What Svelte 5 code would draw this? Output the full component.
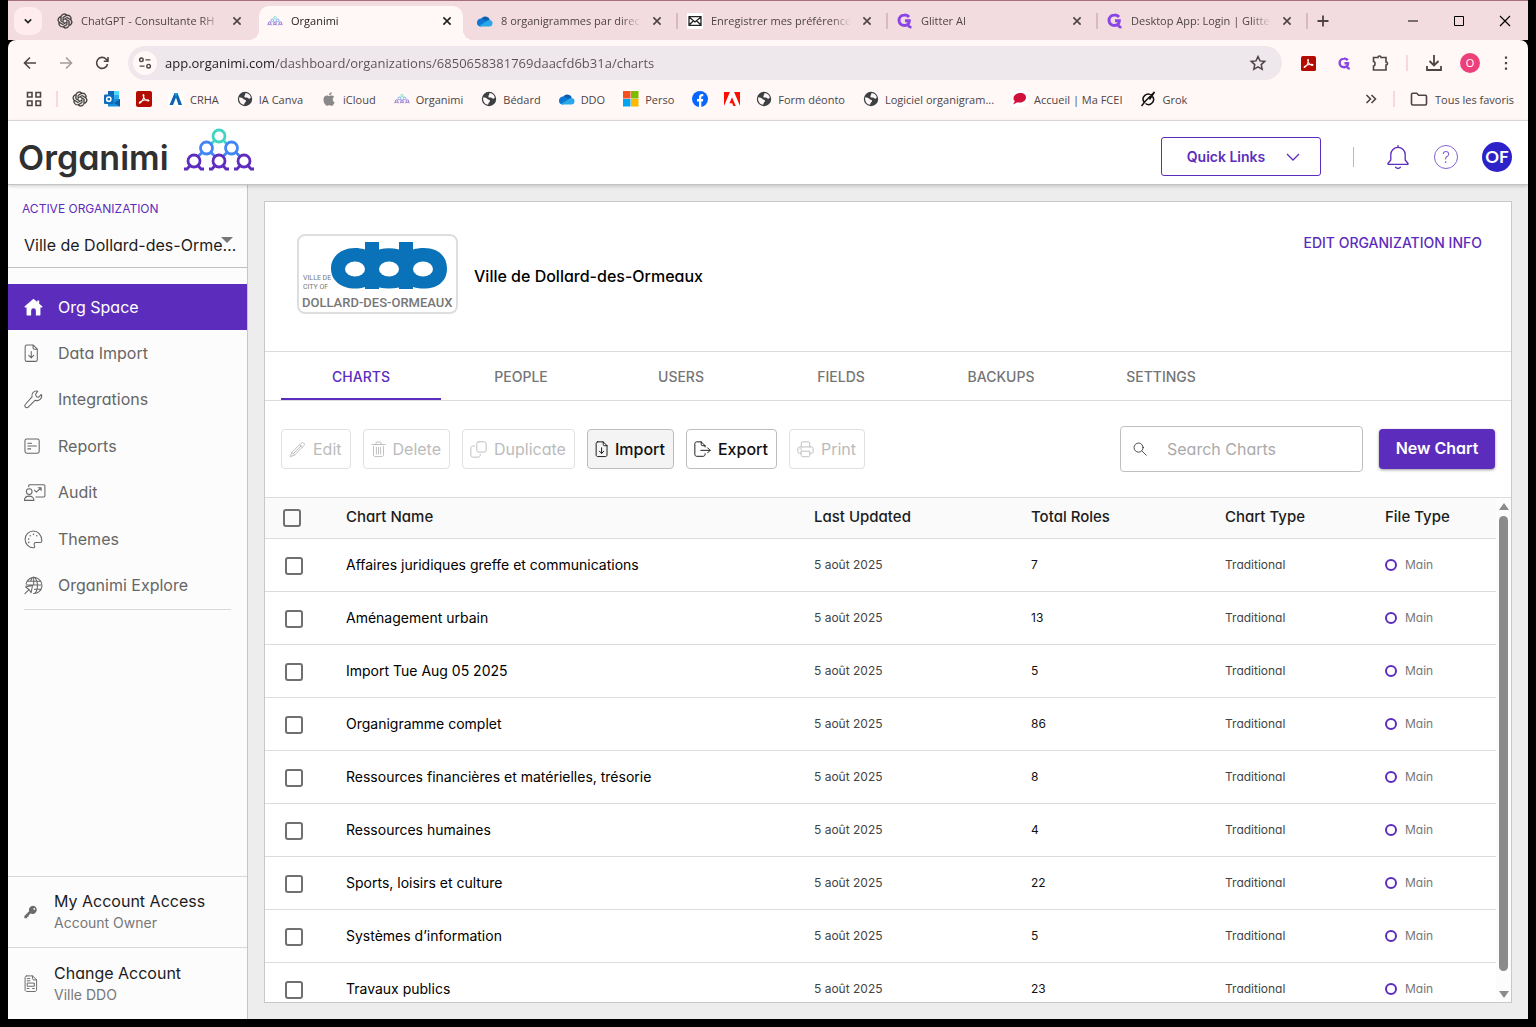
<script>
  const browserTabs = [
    { icon: 'gpt', title: 'ChatGPT - Consultante RH' },
    { icon: 'organimi', title: 'Organimi', active: true },
    { icon: 'cloud', title: '8 organigrammes par direction' },
    { icon: 'mail', title: 'Enregistrer mes préférences', sep: true },
    { icon: 'glitter', title: 'Glitter AI', sep: true },
    { icon: 'glitter', title: 'Desktop App: Login | Glitter AI', sep: true }
  ];

  const bookmarks = [
    { icon: 'gpt', name: 'ChatGPT', bare: true },
    { icon: 'outlook', name: 'Outlook', bare: true },
    { icon: 'acrobat', name: 'Acrobat', bare: true },
    { icon: 'crha', name: 'CRHA' },
    { icon: 'globe', name: 'IA Canva' },
    { icon: 'apple', name: 'iCloud' },
    { icon: 'organimi', name: 'Organimi' },
    { icon: 'globe', name: 'Bédard' },
    { icon: 'cloud', name: 'DDO' },
    { icon: 'microsoft', name: 'Perso' },
    { icon: 'facebook', name: 'Facebook', bare: true },
    { icon: 'adobe', name: 'Adobe', bare: true },
    { icon: 'globe', name: 'Form déonto' },
    { icon: 'globe', name: 'Logiciel organigram...' },
    { icon: 'fcei', name: 'Accueil | Ma FCEI' },
    { icon: 'grok', name: 'Grok' }
  ];

  const nav = [
    { icon: 'home', label: 'Org Space', active: true },
    { icon: 'fileDown', label: 'Data Import' },
    { icon: 'wrench', label: 'Integrations' },
    { icon: 'report', label: 'Reports' },
    { icon: 'audit', label: 'Audit' },
    { icon: 'palette', label: 'Themes' },
    { icon: 'explore', label: 'Organimi Explore' }
  ];

  const sections = ['Charts', 'People', 'Users', 'Fields', 'Backups', 'Settings'];
  let section = $state('Charts');

  const actions = [
    { icon: 'pencil', label: 'Edit', disabled: true },
    { icon: 'trash', label: 'Delete', disabled: true },
    { icon: 'copy', label: 'Duplicate', disabled: true },
    { icon: 'fileDown', label: 'Import', hover: true },
    { icon: 'fileOut', label: 'Export' },
    { icon: 'printer', label: 'Print', disabled: true }
  ];

  // Drawn width of the narrow icons, on a 20-unit grid
  const iconWidths = { fileDown: 15, trash: 18 };

  const charts = [
    ['Affaires juridiques greffe et communications', 7],
    ['Aménagement urbain', 13],
    ['Import Tue Aug 05 2025', 5],
    ['Organigramme complet', 86],
    ['Ressources financières et matérielles, trésorie', 8],
    ['Ressources humaines', 4],
    ['Sports, loisirs et culture', 22],
    ['Systèmes d’information', 5],
    ['Travaux publics', 23]
  ];
</script>

{#snippet people(w)}
  <g fill="none" stroke-width={w}>
    <g stroke="#3ed6c0"><circle cx="36" cy="8" r="6" /><path d="M31 13l-3 3M41 13l3 3" /></g>
    <g stroke="#4285f4"><circle cx="23.500" cy="20" r="6" /><circle cx="48.500" cy="20" r="6" /><path d="M19 24.500l-4 4M28 24.500l4 4M44 24.500l-4 4M53 24.500l4 4" /></g>
    <g stroke="#5e2dbe">
      {#each [11, 36, 61] as x}
        <circle cx={x} cy="33" r="6" />
        <path d="M{x - 10} 41h3l4-4.500M{x + 10} 41h-3l-4-4.500" />
      {/each}
    </g>
  </g>
{/snippet}

{#snippet fav(name)}
  {#if name === 'organimi'}
    <svg class="fav" viewBox="-1 -14 74 74" opacity=".7">{@render people(4)}</svg>
  {:else if name === 'gpt'}
    <svg class="fav" viewBox="-1 -1 26 26"><path fill="#333" stroke="#333" stroke-width=".5" d="M22.282 9.821a5.985 5.985 0 0 0-.516-4.91 6.046 6.046 0 0 0-6.51-2.9A6.065 6.065 0 0 0 4.981 4.182a5.985 5.985 0 0 0-3.998 2.9 6.046 6.046 0 0 0 .743 7.096 5.98 5.98 0 0 0 .511 4.911 6.051 6.051 0 0 0 6.515 2.9A5.985 5.985 0 0 0 13.26 24a6.056 6.056 0 0 0 5.772-4.206 5.989 5.989 0 0 0 3.998-2.9 6.056 6.056 0 0 0-.748-7.073zM13.26 22.429a4.476 4.476 0 0 1-2.876-1.04l.142-.081 4.778-2.758a.795.795 0 0 0 .393-.681v-6.737l2.02 1.168a.071.071 0 0 1 .038.052v5.583a4.504 4.504 0 0 1-4.495 4.494zM3.6 18.304a4.47 4.47 0 0 1-.535-3.014l.142.085 4.783 2.759a.771.771 0 0 0 .78 0l5.843-3.369v2.332a.08.08 0 0 1-.033.062L9.74 19.95A4.5 4.5 0 0 1 3.6 18.304zM2.34 7.896a4.485 4.485 0 0 1 2.366-1.973V11.6a.766.766 0 0 0 .388.677l5.814 3.354-2.02 1.168a.076.076 0 0 1-.071 0l-4.83-2.786A4.504 4.504 0 0 1 2.34 7.896zm16.597 3.855L13.104 8.364 15.119 7.2a.076.076 0 0 1 .071 0l4.83 2.791a4.494 4.494 0 0 1-.676 8.105v-5.678a.79.79 0 0 0-.407-.667zm2.01-3.023l-.141-.085-4.774-2.782a.776.776 0 0 0-.785 0L9.409 9.23V6.897a.066.066 0 0 1 .028-.061l4.83-2.787a4.5 4.5 0 0 1 6.68 4.66zM8.307 12.863l-2.02-1.164a.08.08 0 0 1-.038-.057V6.074a4.5 4.5 0 0 1 7.376-3.453l-.142.08L8.704 5.46a.795.795 0 0 0-.393.681zm1.097-2.365l2.602-1.5 2.607 1.5v2.999l-2.597 1.5-2.607-1.5Z" /></svg>
  {:else if name === 'cloud'}
    <svg class="fav" viewBox="0 0 16 16"><path fill="#0f5fb0" d="M4 6a5 5 0 0 1 8-1l1 3-9 1z" /><path fill="#0a78d4" d="M0 10a4 4 0 0 1 5-4.300l7 3.300-8 4.500H3A3.500 3.500 0 0 1 0 10z" /><path fill="#28a8ea" d="M2 13l7-4.500a4 4 0 0 1 4-1.500 3.300 3.300 0 0 1-.5 6.500H4z" /></svg>
  {:else if name === 'mail'}
    <svg class="fav" viewBox="0 0 16 16"><path fill="#fff" d="M0 0h16v16H0z" /><path d="M2 3.700h12v8.600H2zM2 4l6 5 6-5M2 12l4.500-4.200M14 12L9.500 7.800" fill="none" stroke="#222" stroke-width="1.300" /></svg>
  {:else if name === 'glitter'}
    <svg class="fav" viewBox="0 0 16 16"><path d="M12 4A5 5 0 0 0 7.500 2C4.500 2 2 4.200 2 7.300s2.500 5.200 5.500 5.200S12.300 10.500 12.300 7.800H8" fill="none" stroke="#8a45e6" stroke-width="3" /><path d="M11 10.500c0 2.500 1 3.800 3.500 3.800" fill="none" stroke="#8a45e6" stroke-width="2.600" /></svg>
  {:else if name === 'outlook'}
    <svg class="fav" viewBox="0 0 16 16"><path fill="#1066b5" d="M4 0h6v8H4z" /><path fill="#32a9e7" d="M10 0h5v8h-5z" /><path fill="#50d9ff" d="M10 0h5v4h-5z" /><path fill="#1490df" d="M4 8h12v7.500H4z" /><path fill="#0a5ea8" d="M16 8l-6 4 6 3.500z" /><rect y="3.500" width="9.500" height="9.500" rx="1" fill="#0f6cbd" /><circle cx="4.800" cy="8.200" r="2.100" fill="none" stroke="#fff" stroke-width="1.500" /></svg>
  {:else if name === 'acrobat'}
    <svg class="fav" viewBox="0 0 16 16"><rect width="16" height="16" rx="2" fill="#b30b00" /><path d="M3.500 12.200c1.500.3 4.500-4.700 4.400-7.800 0-1.200-1-1-.8.300.5 3 3 5.300 4.800 5.300 1.600 0 1.200-1.200-.4-1.200-2.500 0-5.500.8-7.200 2-.9.700-1.300 1.300-.8 1.400z" fill="none" stroke="#fff" stroke-width="1.100" /></svg>
  {:else if name === 'crha'}
    <svg class="fav" viewBox="0 0 16 16"><path fill="#fff" d="M0 0h16v16H0z" /><path d="M6.500 2h3L14 14h-3.500L8 6.500 5 14H1.500z" fill="#0b62b0" /><path d="M6.500 2h3L8 6.500z" fill="#1fa2e0" /></svg>
  {:else if name === 'globe'}
    <svg class="fav" viewBox="0 0 16 16"><circle cx="8" cy="8" r="7.200" fill="#3c4043" /><path d="M2 6.500c2 .2 3.500 0 4.500 1.500.5 1 2 .5 2.500 1.500.3 1.500-1.500 1.500-1.800 4.300C4.500 13.500 2 11.500 2 6.500zM8.500 2c3 .2 4.800 2 5.300 4.500-1 1.700-2.500 1.300-3.300.3-.8-.8-2.500.2-3-.8C7 4.500 8.500 4 8.500 2z" fill="#fff8f7" /></svg>
  {:else if name === 'apple'}
    <svg class="fav" viewBox="-2 -2 28 28"><path fill="#888" d="M12.152 6.896c-.948 0-2.415-1.078-3.960-1.040-2.040.027-3.910 1.183-4.961 3.014-2.117 3.675-.546 9.103 1.519 12.090 1.013 1.454 2.208 3.090 3.792 3.039 1.520-.065 2.090-.987 3.935-.987 1.831 0 2.350.987 3.960.948 1.637-.026 2.676-1.480 3.676-2.948 1.156-1.688 1.636-3.325 1.662-3.415-.039-.013-3.182-1.221-3.220-4.857-.026-3.040 2.480-4.494 2.597-4.559-1.429-2.090-3.623-2.324-4.390-2.376-2-.156-3.675 1.090-4.610 1.090zM15.530 3.830c.843-1.012 1.400-2.427 1.245-3.830-1.207.052-2.662.805-3.532 1.818-.780.896-1.454 2.338-1.273 3.714 1.338.104 2.715-.688 3.559-1.701" /></svg>
  {:else if name === 'microsoft'}
    <svg class="fav" viewBox="0 0 16 16"><path fill="#f25022" d="M0 0h7.500v7.500H0z" /><path fill="#7fba00" d="M8 0h7.500v7.500H8z" /><path fill="#00a4ef" d="M0 8h7.500v7.500H0z" /><path fill="#ffb900" d="M8 8h7.500v7.500H8z" /></svg>
  {:else if name === 'facebook'}
    <svg class="fav" viewBox="0 0 16 16"><circle cx="8" cy="8" r="8" fill="#0866ff" /><path fill="#fff" d="M7 16v-5.500H5V8h2V6.600C7 4 8.300 3 10 3c.5 0 1 0 1.300.1v2.200h-1C9.500 5.300 9.300 5.700 9.300 6.500V8h2l-.4 2.500H9.300V16z" /></svg>
  {:else if name === 'adobe'}
    <svg class="fav" viewBox="0 0 24 24"><path fill="#fff" d="M0 1h24v22H0z" /><path fill="#fa0f00" d="M13.966 22.624l-1.690-4.281H8.122l3.892-9.144 5.662 13.425zM8.884 1.376H0v21.248zm15.116 0h-8.884L24 22.624Z" /></svg>
  {:else if name === 'fcei'}
    <svg class="fav" viewBox="0 0 16 16"><path fill="#fff" d="M0 0h16v16H0z" /><path fill="#d0103a" d="M8.500 2C12 2 14 4 14 6.500s-2.500 5-6 5c-1 0-2 0-2.500-.3L1 13.500l2-3.500C1.500 9.500 1.500 8 1.500 7c.5-3 3.500-5 7-5z" /></svg>
  {:else if name === 'grok'}
    <svg class="fav" viewBox="0 0 16 16"><path d="M11.500 4.500a5 5 0 0 0-7.500 6.500M5.500 12.500a5 5 0 0 0 7-7M1.500 15l4-5L14.500 1l-5 7.500" fill="none" stroke="#111" stroke-width="1.500" /></svg>
  {/if}
{/snippet}

{#snippet icon(name, size = 20, w = 20)}
  <svg class="icon" width={Math.round((size * w) / 20)} height={size} viewBox="0 0 {w} 20" fill="none" stroke="currentColor" stroke-width="1.100" stroke-linecap="round" stroke-linejoin="round">
    {#if name === 'home'}
      <path d="M10 .800L.800 8.800c-.500.600-.300 1.200.400 1.200h1.500v7.500c0 .6.400 1 1 1H7.500v-5.200a2.500 2.500 0 0 1 5 0v5.200h3.800c.6 0 1-.4 1-1V10h1.500c.7 0 .9-.6.4-1.200L16 6V2.500h-2v1.800z" fill="currentColor" stroke="none" />
    {:else if name === 'fileDown'}
      <path d="M3 1h6.500l4.500 4.500v11c0 1-.7 1.800-1.800 1.800H3c-1 0-1.800-.8-1.800-1.800V2.800C1.200 1.800 2 1 3 1zM9.500 1v3c0 1 .6 1.500 1.500 1.500h3M7.600 8v6.500M5 12l2.600 2.600L10.200 12" />
    {:else if name === 'wrench'}
      <path d="M14.500 1.200a4.800 4.800 0 0 0-6 6L1.500 15a2 2 0 0 0 3 3l7.300-7.300a4.800 4.800 0 0 0 6.500-6L15.500 7.500 13 7l-.8-2.500z" />
    {:else if name === 'report'}
      <rect x="1" y="2" width="15" height="15" rx="2" /><path d="M4 6.500h4M4 9.500h9M4 12.500h3" />
    {:else if name === 'audit'}
      <path d="M5 4V3c0-.8.5-1.200 1.200-1.200h14.600c.7 0 1.200.4 1.200 1.200v10.500c0 .7-.5 1.200-1.200 1.200H12.500M11 7.500l2 2L18 5M15 5h3v3" /><circle cx="5.500" cy="9" r="3" /><path d="M.5 18.300c0-6 10-6 10 0z" />
    {:else if name === 'palette'}
      <path d="M10 1a8.800 8.800 0 1 0 0 17.700c1.500 0 1.500-1 1-2-.8-2-.2-3.500 1.500-3.500h4.500c1 0 1.800-.5 1.800-2C18.500 5 14.500 1 10 1z" /><path d="M5 9.500v.1M6.500 6v.1M10 4.500v.1M13.500 6v.1M5 13v.1" stroke-width="1.600" />
    {:else if name === 'explore'}
      <path d="M2.200 8A8.500 8.500 0 1 1 10 18.500M7 5.500C8 2.500 9 1 10.200 1s4 3.500 4 8.700-2 8.800-3.700 8.800M10.200 1v8M3 5.500h14.500M2.200 9.500h16.500M11 14h6.500M1 18.500l4-4M1.500 11.500l7.500-1.500-1.500 7.500-2-3z" />
    {:else if name === 'doc'}
      <path d="M3 1h6.500l4.500 4.500v11c0 1-.7 1.800-1.800 1.800H3c-1 0-1.800-.8-1.800-1.800V2.800C1.200 1.800 2 1 3 1zM9.500 1v3c0 1 .6 1.500 1.500 1.500h3M3.500 4h3M3.500 6.500h3M4 9h7.500v3.500H4zM3.500 15h2M9.500 15h2" />
    {:else if name === 'key'}
      <path d="M13 1a6 6 0 0 0-5.700 8L.5 15.700V19h4v-2.200h2.200v-2.300L9.500 12.300A6 6 0 1 0 13 1zm1.700 3.300a1.300 1.300 0 1 1 0 2.600 1.300 1.300 0 0 1 0-2.600z" fill="currentColor" stroke="none" />
    {:else if name === 'pencil'}
      <path d="M14.500 2.500c1-1 2-1 3 0s1 2 0 3L6.500 16.500 1.500 18.500l2-5zM12.500 4.500l3 3M3.500 13.500l3 3M5.500 14.500l9-9" />
    {:else if name === 'trash'}
      <path d="M1 4h16M6 4V2c0-.6.400-1 1-1h4c.6 0 1 .4 1 1v2M3 6.500v10c0 1 .8 2 2 2h8c1.200 0 2-1 2-2v-10M6.500 7.500v8M9 7.500v8M11.500 7.500v8" />
    {:else if name === 'copy'}
      <rect x="8" y="1" width="11" height="12" rx="2" /><path d="M5.500 6H3C2 6 1 7 1 8v9c0 1 1 2 2 2h7c1 0 2-1 2-2v-1.500" />
    {:else if name === 'fileOut'}
      <path d="M13 7V5.500L8.500 1H3C2 1 1 2 1 3v13c0 1 1 2 2 2h8c1 0 2-1 2-2v-1M8.500 1v3c0 1 .5 1.500 1.500 1.500h3M8 11h11M16 8l3 3-3 3" />
    {:else if name === 'printer'}
      <path d="M5 7V2.500C5 1.600 5.600 1 6.500 1h7c.9 0 1.500.6 1.500 1.500V7M4.500 14.500H3c-1.200 0-2-.8-2-2V9c0-1.200.8-2 2-2h14c1.200 0 2 .8 2 2v3.500c0 1.200-.8 2-2 2h-1.500M5 12h10v5c0 .9-.6 1.500-1.500 1.500h-7C5.600 18.500 5 17.900 5 17zM3.500 9.500h2" />
    {:else if name === 'search'}
      <circle cx="8" cy="8" r="6.500" /><path d="M13 13l6 6" />
    {:else if name === 'bell'}
      <path d="M10 .500v1.500M4 12.500V8a6 6 0 0 1 12 0v4.500l2.200 2.700c.3.400.2 1-.4 1H2.200c-.6 0-.7-.6-.4-1zM8 18.500c.8 1.300 3.200 1.300 4 0" />
    {/if}
  </svg>
{/snippet}

{#snippet glyph(d, w = 1.6)}
  <svg class="glyph" viewBox="0 0 20 20" fill="none" stroke="currentColor" stroke-width={w}><path {d} /></svg>
{/snippet}

<div class="window">
  <div class="strip">
    <button class="tab-search" aria-label="Search tabs">{@render glyph('M6 8l4 4 4-4', 2)}</button>
    {#each browserTabs as t}
      <div class="btab" class:active={t.active} class:sep={t.sep}>
        {@render fav(t.icon)}
        <button class="btitle">{t.title}</button>
        <button class="bclose" aria-label="Close tab">{@render glyph('M5.500 5.500l9 9M14.500 5.500l-9 9', 2)}</button>
      </div>
    {/each}
    <div class="newtab"><button aria-label="New tab">{@render glyph('M10 4.500v11M4.500 10h11', 1.8)}</button></div>
    <div class="winctl">
      <button aria-label="Minimize">{@render glyph('M5 10h10', 1)}</button>
      <button aria-label="Maximize">{@render glyph('M5.500 5.500h9v9h-9z', 1)}</button>
      <button aria-label="Close">{@render glyph('M5 5l10 10M15 5L5 15', 1.2)}</button>
    </div>
  </div>

  <div class="toolbar">
    <button class="tool" aria-label="Back">{@render glyph('M16 10H5M10 4.500L4.500 10l5.500 5.500')}</button>
    <button class="tool faded" aria-label="Forward">{@render glyph('M4 10h11M10 4.500l5.500 5.500L10 15.500')}</button>
    <button class="tool" aria-label="Reload">{@render glyph('M15.500 11a5.500 5.500 0 1 1-1.500-5l2 2M16 4v4.200h-4.200')}</button>
    <div class="address">
      <button class="site" aria-label="Site information">{@render glyph('M10.500 6.500H16M4 13.500h5.500M4 6.500a2 2 0 1 0 4 0a2 2 0 1 0-4 0M12 13.500a2 2 0 1 0 4 0a2 2 0 1 0-4 0')}</button>
      <input class="url" aria-label="Address" value="app.organimi.com/dashboard/organizations/6850658381769daacfd6b31a/charts" />
      <button class="star" aria-label="Bookmark">{@render glyph('M10 3.500l2 4.400 4.800.5-3.600 3.200 1 4.700L10 13.900l-4.200 2.400 1-4.700-3.600-3.200L8 7.900z', 1.5)}</button>
    </div>
    <button class="tool" aria-label="Acrobat">{@render fav('acrobat')}</button>
    <button class="tool small" aria-label="Glitter">{@render fav('glitter')}</button>
    <button class="tool" aria-label="Extensions">{@render glyph('M3.500 4.500h4.500c0-2 3-2 3 0h5V9c2 0 2 3 0 3v5h-12.500v-4c2 0 2-4.500 0-4.500z')}</button>
    <span class="bar"></span>
    <button class="tool" aria-label="Downloads">{@render glyph('M10 2v10M5.500 8L10 12.500 14.500 8M3 13v4h14v-4', 1.8)}</button>
    <button class="tool" aria-label="Profile"><span class="profile">O</span></button>
    <button class="tool" aria-label="Menu">{@render glyph('M10 3.500v2.200M10 9v2.200M10 14.500v2.200', 2.2)}</button>
  </div>

  <div class="bookmarks">
    <button class="apps" aria-label="Apps">{@render glyph('M3.500 3.500h4.500v4.500H3.500zM12 3.500h4.500v4.500H12zM3.500 12h4.500v4.500H3.500zM12 12h4.500v4.500H12z')}</button>
    <span class="bar"></span>
    {#each bookmarks as b}
      <a class="bookmark" class:bare={b.bare} href="#{b.icon}" aria-label={b.name}>{@render fav(b.icon)}{#if !b.bare}<span>{b.name}</span>{/if}</a>
    {/each}
    <button class="more" aria-label="More bookmarks">{@render glyph('M5.500 6l4 4-4 4M10.500 6l4 4-4 4')}</button>
    <span class="bar"></span>
    <a class="bookmark all" href="#all">{@render glyph('M2.500 5.500c0-.8.5-1.300 1.200-1.300h4l2 2h6.600c.7 0 1.200.5 1.200 1.200v7.400c0 .7-.5 1.200-1.200 1.200H3.700c-.7 0-1.200-.5-1.200-1.200z')}<span>Tous les favoris</span></a>
  </div>

  <header>
    <a class="brand" href="#home"><span>Organimi</span><svg viewBox="0 0 72 44" aria-hidden="true">{@render people(2.8)}</svg></a>
    <button class="quick">Quick Links {@render glyph('M4 7l6 6 6-6', 1.3)}</button>
    <span class="rule"></span>
    <button class="round" aria-label="Notifications">{@render icon('bell', 24)}</button>
    <button class="round help" aria-label="Help">?</button>
    <button class="avatar">OF</button>
  </header>

  <div class="body">
    <aside>
      <div class="active-org">
        <label for="org">ACTIVE ORGANIZATION</label>
        <div class="pick">
          <select id="org"><option>Ville de Dollard-des-Ormeaux</option></select>
          <i></i>
        </div>
      </div>
      <nav>
        {#each nav as n}
          <a href="#{n.icon}" class:on={n.active}><span class="slot">{@render icon(n.icon)}</span><span>{n.label}</span></a>
        {/each}
      </nav>
      <a class="account first" href="#access"><span class="slot">{@render icon('key', 14)}</span><span>My Account Access<small>Account Owner</small></span></a>
      <a class="account" href="#change"><span class="slot">{@render icon('doc', 18)}</span><span>Change Account<small>Ville DDO</small></span></a>
    </aside>

    <main>
      <div class="card">
        <div class="org">
          <div class="logo">
            <svg viewBox="0 0 157 76" role="img" aria-label="Dollard-des-Ormeaux">
              <path fill="#0a72b8" d="M66 6h14v7.500q10-2.500 20 0V6h14v7.500c4-1 6-1.500 11-1.500 14 0 23 8 23 20.500s-9 20-23 20c-4 0-7-.5-11-1.500V53h-14v-1.500q-10 2-20 0V53H66v-2c-4 1-6 1.500-10 1.500-14 0-24-8-24-20s10-20.500 24-20.500c4 0 6 .5 10 1.500z" />
              <g fill="#fff"><ellipse cx="56" cy="33" rx="10" ry="7.500" /><ellipse cx="90" cy="33" rx="10" ry="7.500" /><ellipse cx="124" cy="33" rx="10" ry="7.500" /></g>
              <g class="tiny"><text x="4" y="44">VILLE DE</text><text x="4" y="53">CITY OF</text></g>
              <text class="name" x="3" y="71">DOLLARD-DES-ORMEAUX</text>
            </svg>
          </div>
          <h1>Ville de Dollard-des-Ormeaux</h1>
          <button class="edit">EDIT ORGANIZATION INFO</button>
        </div>

        <div class="tabs" role="tablist">
          {#each sections as s}
            <button role="tab" aria-selected={section === s} class:on={section === s} onclick={() => (section = s)}>{s}</button>
          {/each}
        </div>

        <div class="actions">
          {#each actions as a}
            <button class="act" class:hover={a.hover} disabled={a.disabled}>{@render icon(a.icon, 17, iconWidths[a.icon])}<span>{a.label}</span></button>
          {/each}
          <label class="search">{@render icon('search', 14)}<input type="text" placeholder="Search Charts" aria-label="Search Charts" /></label>
          <button class="new">New Chart</button>
        </div>

        <div class="list">
          <div class="scroll">
            <table>
              <colgroup><col class="c1" /><col /><col class="c3" /><col class="c4" /><col class="c5" /><col class="c6" /></colgroup>
              <thead>
                <tr><th><input type="checkbox" aria-label="Select all" /></th><th>Chart Name</th><th>Last Updated</th><th>Total Roles</th><th>Chart Type</th><th>File Type</th></tr>
              </thead>
              <tbody>
                {#each charts as [name, roles]}
                  <tr>
                    <td><input type="checkbox" aria-label={name} /></td>
                    <td class="cname">{name}</td>
                    <td class="date">5 août 2025</td>
                    <td class="roles">{roles}</td>
                    <td class="type">Traditional</td>
                    <td class="file"><span><i></i>Main</span></td>
                  </tr>
                {/each}
              </tbody>
            </table>
          </div>
          <div class="scrollbar"><i class="up"></i><i class="thumb"></i><i class="down"></i></div>
        </div>
      </div>
    </main>
  </div>
</div>

<style>
  :global(body) { margin: 0; background: #000; }
  * { box-sizing: border-box; }
  button, input, select { font: inherit; color: inherit; border: 0; background: none; padding: 0; margin: 0; outline: 0; }
  button { cursor: pointer; }
  a { color: inherit; text-decoration: none; }
  svg { display: block; flex: none; }

  .window { height: 100vh; display: flex; flex-direction: column; padding: 0 8px 8px; font-family: Inter, "Liberation Sans", sans-serif; font-size: 16px; color: #1c1c1c; font-feature-settings: "cv11"; }
  .fav { width: 16px; height: 16px; }
  .glyph { width: 20px; height: 20px; }

  .strip, .toolbar, .bookmarks { display: flex; align-items: center; flex: none; background: #fff8f6; font-family: "Open Sans", sans-serif; font-size: 11px; color: #4d4446; }
  .strip { height: 40px; background: #f3dce0; border-top: 1px solid #a8707f; }
  .tab-search { width: 28px; height: 28px; border-radius: 10px; background: #ffecee; margin: 0 4px 0 6px; display: grid; place-items: center; color: #222; }
  .tab-search .glyph { width: 16px; height: 16px; }
  .btab { width: 210px; height: 100%; padding: 0 11px; display: flex; align-items: center; gap: 8px; position: relative; }
  .btitle { flex: 1; text-align: left; overflow: hidden; white-space: nowrap; min-width: 0; mask-image: linear-gradient(to right, #000 86%, transparent); }
  .bclose { width: 16px; height: 16px; }
  .bclose .glyph { width: 16px; height: 16px; }
  .btab.active { color: #222; isolation: isolate; }
  .btab.active::before { content: ""; position: absolute; z-index: -1; inset: 5px 3px 0; background: #fff8f6; border-radius: 10px 10px 0 0; }
  .btab.active::after { content: ""; position: absolute; z-index: -1; left: -7px; right: -7px; bottom: 0; height: 10px; background: radial-gradient(circle at 0 0, transparent 10px, #fff8f6 10px) left / 10px 10px no-repeat, radial-gradient(circle at 100% 0, transparent 10px, #fff8f6 10px) right / 10px 10px no-repeat; }
  .btab.sep, .newtab { background: linear-gradient(#dcb9c0, #dcb9c0) left center / 2px 16px no-repeat; }
  .newtab { height: 100%; padding-left: 7px; display: flex; align-items: center; }
  .winctl { margin-left: auto; display: flex; color: #000; }
  .winctl button { width: 46px; height: 30px; display: grid; place-items: center; }

  .toolbar { height: 46px; padding: 0 4px; border-radius: 8px 8px 0 0; box-shadow: 0 -8px 0 0 #f3dce0; }
  .toolbar { box-shadow: none; }
  .tool { width: 36px; height: 34px; display: grid; place-items: center; flex: none; }
  .tool .fav { width: 15px; height: 15px; }
  .tool.small .fav { width: 13px; height: 13px; }
  .faded { opacity: .5; }
  .address { flex: 1; min-width: 0; display: flex; align-items: center; height: 34px; margin: 0 8px; padding: 0 14px 0 5px; border-radius: 17px; background: #eee8ec; }
  .site { width: 24px; height: 24px; border-radius: 50%; background: #fff8f6; display: grid; place-items: center; }
  .site .glyph { width: 18px; height: 18px; }
  .url { flex: 1; min-width: 0; margin-left: 8px; font-size: 13px; color: transparent; background: linear-gradient(to right, #1f1a1b 110px, #5a5053 110px); background-clip: text; }
  .bar { width: 18px; height: 16px; flex: none; background: linear-gradient(#f8d8dd, #f8d8dd) center / 2px 16px no-repeat; }
  .profile { width: 20px; height: 20px; line-height: 20px; border-radius: 50%; background: #ec407a; color: #fff; text-align: center; }

  .bookmarks { height: 35px; padding: 0 6px 8px; border-bottom: 1px solid #e6dfe0; }
  .apps { margin: 0 4px 0 10px; }
  .bookmark { display: flex; align-items: center; gap: 6px; padding: 0 10px 0 8px; white-space: nowrap; }
  .bookmark.bare { padding-right: 8px; }
  .bookmarks > .bar + .bookmark { margin-left: -2px; }
  .more { margin-left: auto; margin-right: 4px; }
  .bookmark.all { padding-right: 8px; }

  header { flex: none; height: 64px; display: flex; align-items: center; padding: 0 16px 0 10px; background: #fff; border-bottom: 1px solid #c4c4c4; box-shadow: 0 1px 4px rgba(0, 0, 0, .2); z-index: 1; color: #5c2dbd; }
  .brand { display: flex; align-items: center; margin-right: auto; gap: 14px; font-size: 34px; font-weight: 600; color: #303030; }
  .brand svg { width: 72px; height: 44px; margin-bottom: 6px; }
  .brand span { padding-top: 10px; line-height: 54px; }
  .quick { width: 160px; height: 39px; margin-top: 8px; padding-left: 8px; border: 1px solid; border-radius: 3px; font-size: 14px; font-weight: 600; display: flex; align-items: center; justify-content: center; gap: 18px; }
  .rule { width: 1px; height: 20px; background: #bbb; margin: 8px 32px 0; }
  .round { width: 24px; height: 24px; margin: 8px 24px 0 0; display: grid; place-items: center; }
  .help { border: 1px solid; border-radius: 50%; opacity: .75; font-weight: 300; line-height: 22px; }
  .avatar { width: 30px; height: 30px; margin-top: 8px; border-radius: 50%; background: #2c22c8; color: #fff; font: 700 17px Lato, sans-serif; text-align: center; }

  .body { flex: 1; min-height: 0; display: flex; background: #ededed; }
  aside { width: 240px; flex: none; display: flex; flex-direction: column; background: #fcfcfc; border-right: 1px solid #c6c6c6; }
  .active-org { height: 83px; padding: 16px 10px 0 14px; border-bottom: 1px solid #c0c0c0; }
  label[for] { display: block; font-size: 12px; line-height: 16px; color: #5c2dbd; }
  .pick { display: flex; margin-top: 18px; padding-left: 2px; position: relative; }
  select { width: 100%; height: 20px; appearance: none; line-height: 20px; text-overflow: ellipsis; overflow: hidden; white-space: nowrap; }
  .pick i { position: absolute; right: 4px; top: 2px; border: 6px solid transparent; border-top-color: #777; border-bottom: 0; }
  nav { margin: 16px 0 auto; height: 326px; display: flex; flex-direction: column; justify-content: space-between; }
  nav::after { content: ""; margin: 0 16px; border-top: 1px solid #d8d8d8; }
  nav a { height: 46px; display: flex; align-items: center; padding-left: 16px; color: #666; }
  nav a span:last-child { padding-bottom: 1px; }
  nav a.on { background: #5c2dbd; color: #fff; }
  .slot { width: 34px; display: flex; flex: none; }
  aside .icon { overflow: visible; }
  nav .icon { width: 19px; height: 19px; }
  .account { height: 72px; display: flex; align-items: center; padding-left: 16px; border-top: 1px solid #d8d8d8; }
  .account.first { height: 71px; }
  .account .slot { width: 30px; color: #6b6b6b; }
  .account > span { line-height: 22px; }
  small { display: block; font-size: 14px; color: #777; line-height: 22px; }

  main { flex: 1; min-width: 0; padding: 16px; display: flex; }
  .card { flex: 1; min-width: 0; display: flex; flex-direction: column; background: #fff; border: 1px solid #c8c8c8; }
  .org { flex: none; height: 150px; display: flex; align-items: center; gap: 16px; padding: 0 29px 6px 32px; border-bottom: 1px solid #dcdcdc; }
  .logo { width: 161px; height: 80px; border: 2px solid #dedede; border-radius: 8px; overflow: hidden; }
  .logo svg { width: 157px; height: 76px; font-family: Roboto, sans-serif; fill: #777; }
  .tiny { font-size: 7px; }
  .name { font-size: 13px; font-weight: 500; }
  h1 { margin: 0; padding-top: 4px; font-size: 16px; font-weight: 500; color: #000; }
  .edit { margin: 0 0 62px auto; font-size: 14px; font-weight: 500; color: #5c2dbd; }
  .tabs { flex: none; height: 49px; display: flex; padding: 0 16px; border-bottom: 1px solid #dcdcdc; }
  .tabs button { width: 160px; padding-top: 2px; border-bottom: 2px solid transparent; text-transform: uppercase; font-size: 14px; font-weight: 500; color: #757575; }
  .tabs .on { color: #5c2dbd; border-color: #5c2dbd; }
  .actions { flex: none; height: 97px; display: flex; align-items: center; gap: 12px; padding: 0 16px; border-bottom: 1px solid #dcdcdc; }
  .act { height: 40px; padding: 0 8px 0 7px; display: flex; align-items: center; gap: 7px; border: 1px solid #bdbdbd; border-radius: 4px; font-weight: 500; color: #111; }
  .act span { padding-bottom: 1px; }
  .act:disabled { color: #bbb; border-color: #e0e0e0; font-weight: 400; }
  .hover { background: #f4f4f4; }
  .search { width: 243px; height: 46px; margin-left: auto; border: 1px solid #c0c0c0; border-radius: 4px; display: flex; align-items: center; gap: 20px; padding: 0 12px; }
  .search input { flex: 1; min-width: 0; }
  .search input::placeholder { color: #aaa; opacity: 1; }
  .new { width: 116px; height: 40px; margin-left: 4px; padding-bottom: 2px; border-radius: 4px; background: #5c2dbd; color: #fff; font-weight: 600; box-shadow: 0 1px 3px rgba(0, 0, 0, .4); }

  .list { flex: 1; min-height: 0; display: flex; }
  .scroll { flex: 1; min-width: 0; overflow: hidden; }
  table { width: 100%; border-collapse: separate; border-spacing: 0; table-layout: fixed; }
  .c1 { width: 81px; }
  .c3 { width: 217px; }
  .c4 { width: 194px; }
  .c5 { width: 160px; }
  .c6 { width: 111px; }
  th, td { padding: 0; text-align: left; vertical-align: middle; border-bottom: 1px solid #dcdcdc; }
  th { height: 41px; padding-bottom: 3px; background: #fafafa; font-size: 15px; font-weight: 500; }
  td { height: 53px; padding-bottom: 1px; }
  th:first-child { padding: 0 0 0 18px; }
  td:first-child { padding: 2px 0 0 20px; }
  input[type="checkbox"] { appearance: none; display: block; width: 18px; height: 18px; border: 2px solid #707070; border-radius: 3px; }
  .cname, .date, .roles { font-feature-settings: normal; }
  .cname { font-size: 14px; color: #000; }
  .date { font-size: 12px; color: #444; }
  .roles { font-size: 12px; color: #111; }
  .type { font-size: 12px; color: #444; }
  .file { font-size: 12px; color: #777; }
  .file span { display: flex; align-items: center; gap: 8px; }
  .file i { width: 12px; height: 12px; border: 2px solid #5c2dbd; border-radius: 50%; }
  .scrollbar { width: 15px; flex: none; display: flex; flex-direction: column; align-items: center; padding: 5px 0 4px; background: #fcfcfc; }
  .up, .down { border: 5px solid transparent; }
  .up { border-top: 0; border-bottom: 7px solid #8b8b8b; margin-bottom: 6px; }
  .down { border-bottom: 0; border-top: 7px solid #8b8b8b; margin-top: auto; }
  .thumb { width: 9px; flex: 0 1 455px; border-radius: 5px; background: #8b8b8b; }
</style>
